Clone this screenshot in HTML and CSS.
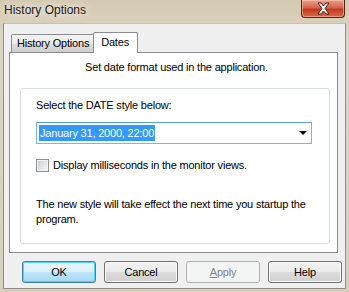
FILE: index.html
```html
<!DOCTYPE html>
<html lang="en">
  <head>
    <meta charset="UTF-8" />
    <title>History Options</title>
    <link rel="stylesheet" href="styles.css">
  </head>
  <body>
    <div class="window">
      <div class="titlebar">
        <span class="title">History Options</span>
        <span class="close-btn">
          <svg width="15" height="13" viewBox="0 0 15 13">
            <path d="M2 1 L5 1 L7.5 4 L10 1 L13 1 L9 6.5 L13 12 L10 12 L7.5 9 L5 12 L2 12 L6 6.5 Z"
              fill="#fff" stroke="#4a1a12" stroke-width="1" stroke-linejoin="round" />
          </svg>
        </span>
      </div>

      <div class="client">
        <div class="tabs">
          <div class="tab">History Options</div>
          <div class="tab tab-active">Dates</div>
        </div>

        <div class="panel">
          <p class="intro">Set date format used in the application.</p>

          <div class="group">
            <div class="field-label">Select the DATE style below:</div>
            <div class="combo">
              <span class="combo-value">January 31, 2000, 22:00</span>
              <span class="combo-arrow"></span>
            </div>
            <label class="check">
              <span class="check-box"></span>
              <span>Display milliseconds in the monitor views.</span>
            </label>
            <p class="note">
              The new style will take effect the next time you startup the<br />program.
            </p>
          </div>
        </div>

        <div class="buttons">
          <button class="btn btn-default">OK</button>
          <button class="btn">Cancel</button>
          <button class="btn btn-disabled"><u>A</u>pply</button>
          <button class="btn">Help</button>
        </div>
      </div>
    </div>
  </body>
</html>
```

FILE: styles.css
```css
:root {
  --frame: #d6ccb6;
  --client-bg: #f0f0f0;
  --tab-border: #898c95;
  --group-border: #d5dfe5;
  --text: #000;
  --ui-font: "Liberation Sans", Arial, sans-serif;
}

* {
  margin: 0;
  padding: 0;
  box-sizing: border-box;
}

body {
  font-family: var(--ui-font);
  font-size: 11px;
  letter-spacing: -0.2px;
  color: var(--text);
  background: var(--frame);
}

.window {
  width: 349px;
  height: 292px;
  padding: 0 3px 3px;
  background: linear-gradient(to bottom, #d4c9b1 0, #ddd5c4 40px, #d8cfbb 100%);
  display: flex;
  flex-direction: column;
}

/* title bar */

.titlebar {
  height: 23px;
  display: flex;
  justify-content: space-between;
  align-items: flex-start;
  flex-shrink: 0;
}

.title {
  font-size: 12px;
  letter-spacing: 0;
  line-height: 20px;
  color: #1b1b1b;
  padding-left: 1px;
  text-shadow: 0 0 6px #f4efe4, 0 0 10px #f4efe4;
}

.close-btn {
  width: 44px;
  height: 18px;
  margin-right: 1px;
  display: flex;
  align-items: center;
  justify-content: center;
  border: 1px solid #5a2318;
  border-top: none;
  border-radius: 0 0 4px 4px;
  background: linear-gradient(to bottom, #e8a08f 0, #d4654c 45%, #c2391b 55%, #d86a45 100%);
  box-shadow: inset 0 0 0 1px rgba(255, 210, 190, 0.5);
}

/* client area */

.client {
  flex: 1;
  background: var(--client-bg);
  border: 1px solid #8d8d8d;
  border-top-color: #c9c1ae;
  display: flex;
  flex-direction: column;
}

.tabs {
  display: flex;
  align-items: flex-end;
  margin: 8px 0 0 7px;
  height: 20px;
}

.tab {
  height: 18px;
  padding: 0 5px;
  line-height: 17px;
  border: 1px solid var(--tab-border);
  border-bottom: none;
  border-radius: 2px 2px 0 0;
  background: linear-gradient(to bottom, #f3f3f3 0, #ebebeb 50%, #dddddd 51%, #cfcfcf 100%);
  white-space: nowrap;
}

.tab-active {
  position: relative;
  height: 21px;
  margin-bottom: -1px;
  margin-left: -2px;
  padding: 0 8px 0 7px;
  line-height: 18px;
  background: #fff;
  z-index: 1;
}

.panel {
  height: 201px;
  margin: 0 7px 0 5px;
  background: #fff;
  border: 1px solid var(--tab-border);
  padding: 7px 7px 0 10px;
}

.intro {
  text-align: center;
  line-height: 14px;
  padding-left: 3px;
}

.group {
  margin-top: 14px;
  height: 156px;
  border: 1px solid var(--group-border);
  border-radius: 3px;
  padding: 9px 17px 0 15px;
}

.field-label {
  line-height: 14px;
}

.combo {
  margin-top: 10px;
  height: 22px;
  display: flex;
  align-items: center;
  justify-content: space-between;
  padding: 0 4px 0 2px;
  border: 1px solid #7eb4ea;
  border-top-color: #569de5;
  background: #fff;
}

.combo-value {
  background: #3399ff;
  color: #fff;
  line-height: 16px;
  padding: 0 1px;
}

.combo-arrow {
  width: 0;
  height: 0;
  border-left: 4px solid transparent;
  border-right: 4px solid transparent;
  border-top: 4px solid #000;
}

.check {
  margin-top: 14px;
  display: flex;
  align-items: center;
  gap: 4px;
  line-height: 14px;
}

.check-box {
  width: 13px;
  height: 13px;
  border: 1px solid #8e8f8f;
  background: linear-gradient(135deg, #c9ccd1 0, #e4e6e8 55%, #f6f6f6 100%);
  box-shadow: inset 0 0 0 1px #f4f4f4;
}

.note {
  margin-top: 25px;
  line-height: 15px;
}

/* buttons */

.buttons {
  display: flex;
  gap: 8px;
  margin: 8px 0 0 18px;
}

.btn {
  width: 74px;
  height: 22px;
  font-family: var(--ui-font);
  font-size: 11px;
  letter-spacing: -0.2px;
  color: #000;
  border: 1px solid #707070;
  border-radius: 3px;
  background: linear-gradient(to bottom, #f2f2f2 0, #ebebeb 50%, #dddddd 51%, #cfcfcf 100%);
  box-shadow: inset 0 0 0 1px #fbfbfb;
}

.btn-default {
  border-color: #3c7fb1;
  background: linear-gradient(to bottom, #eaf6fd 0, #d9f0fc 50%, #bee6fd 51%, #a7d9f5 100%);
  box-shadow: inset 0 0 0 1px #48d8fb;
}

.btn-disabled {
  color: #838383;
  border-color: #adb2b5;
  background: #f4f4f4;
  box-shadow: none;
}

.btn-disabled u {
  text-decoration: underline;
}
```
